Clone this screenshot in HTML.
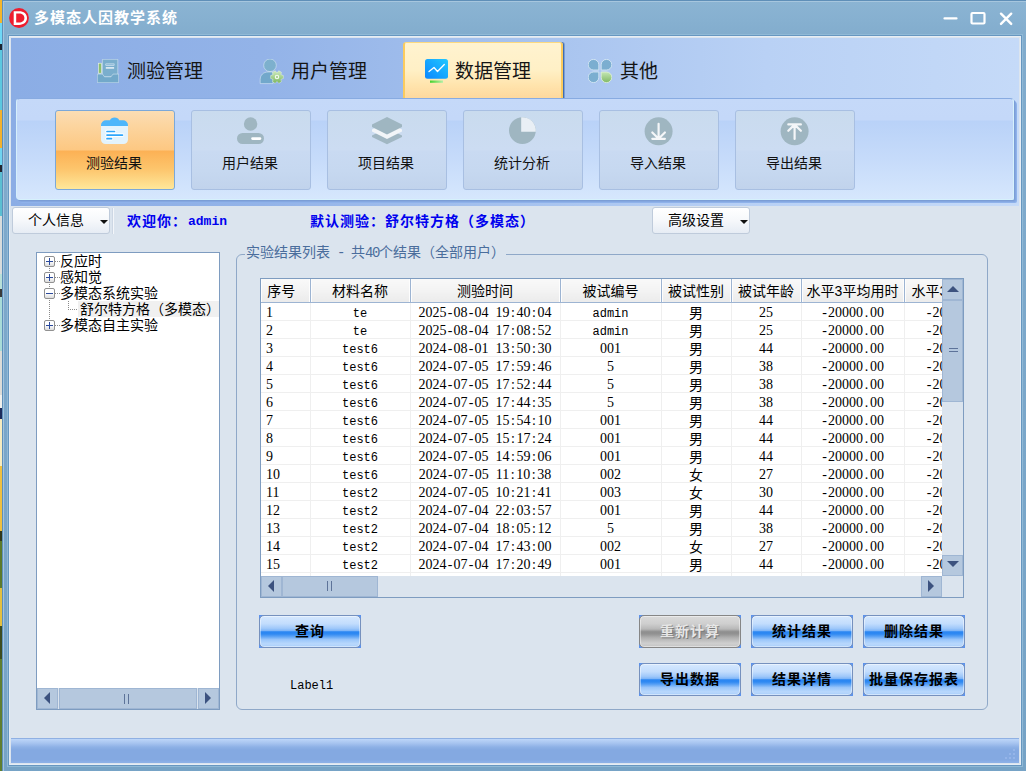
<!DOCTYPE html>
<html lang="zh-CN">
<head>
<meta charset="utf-8">
<title>多模态人因教学系统</title>
<style>
*{box-sizing:border-box;margin:0;padding:0}
html,body{width:1026px;height:771px;overflow:hidden}
body{position:relative;background:#84aece;font-family:"Liberation Sans","Noto Sans CJK SC",sans-serif;font-size:14px;color:#000}
.a{position:absolute}
.nw{white-space:nowrap}
/* desktop sliver on the far left */
#desk{left:0;top:0;width:2px;height:771px;background:linear-gradient(#f5b62a 0px,#f5b62a 23px,#6fd8f6 23px,#6fd8f6 44px,#1c2330 44px,#1c2330 50px,#5cc8e0 50px,#5cc8e0 110px,#f2b22c 110px,#f2b22c 148px,#6fd4f0 148px,#6fd4f0 165px,#22262e 165px,#22262e 172px,#5bbfd2 172px,#5bbfd2 216px,#d8dcdc 216px,#d8dcdc 274px,#b8e0d8 274px,#b8e0d8 289px,#3a3a3a 289px,#3a3a3a 297px,#a8dcd8 297px,#a8dcd8 351px,#dcdcd8 351px,#dcdcd8 395px,#f0f0ec 395px,#f0f0ec 408px,#1c2c5c 408px,#1c2c5c 419px,#f6ecc0 419px,#f6ecc0 466px,#eec040 466px,#eec040 531px,#30381c 531px,#30381c 541px,#5b7a2c 541px,#5b7a2c 588px,#e3c040 588px,#e3c040 626px,#3c4c20 626px,#3c4c20 659px,#5f7e30 659px,#5f7e30 771px)}
/* window frame */
#frame{left:2px;top:0;width:1024px;height:771px;background:linear-gradient(#8bb4d3 0,#86b0d0 20px,#82accd 36px,#7ba7ca 400px,#76a3c6 771px);border-left:1px solid #5f90ba;border-top:1px solid #5f8fb8}
#frame:before{content:"";position:absolute;left:0;top:0;right:0;bottom:0;border-left:1px solid #a3c4dd;border-top:1px solid #a6c6de}
#frIn{left:8px;top:35px;width:1014px;height:731px;border:1px solid #6797c0;box-shadow:0 0 0 1px #90b9d6}
#client{left:9px;top:36px;width:1012px;height:729px;background:#dbe4ee;box-shadow:inset 1px 1px 0 #e6edf5,inset -1px -1px 0 #e6edf5}
/* title */
#ticon{left:9px;top:8px;width:20px;height:20px}
#ttext{left:34px;top:8px;height:20px;line-height:20px;font-size:15px;font-weight:bold;color:#fff;letter-spacing:1px}
.wc{stroke:#fff;stroke-width:2.2;fill:none;stroke-linecap:round;stroke-linejoin:round}
/* ribbon control */
#rib{left:11px;top:38px;width:1008px;height:168px;background:linear-gradient(90deg,#8badE5 0,#93b3e8 25%,#a6c2ee 50%,#b9d1f5 75%,#c5daf8 100%)}
.tab{top:43px;height:55px}
.tab svg{position:absolute}
.tl{position:absolute;top:15px;height:28px;line-height:28px;font-size:19px;color:#151515;white-space:nowrap}
#tabA{left:403px;top:42px;width:160px;height:57px;background:linear-gradient(#fff3d0 0,#fff0c6 48%,#ffe4ad 75%,#fed79c 100%);border-top:1px solid #fcd980;border-left:2px solid #fbcb5e;border-right:2px solid #fbcb5e;border-radius:3px 3px 0 0;box-shadow:1px 0 0 #3f6db3,2px 0 0 rgba(68,112,180,.45)}
#panel{left:16px;top:98px;width:998px;height:102px;border-radius:4px 4px 2px 4px;border:1px solid #d6f1fc;border-top-color:#88abe1;border-left-color:#d6effb;box-shadow:1px 1px 0 #7b9dd6,2px 2px 0 #84a7e0,3px 3px 0 #8fb2ea;background:linear-gradient(#c5d9f9 0,#c4d8f9 21px,#b9d2f8 22px,#c6dbfa 60px,#d6e7fd 100%)}
.rb{top:110px;width:120px;height:80px;border:1px solid #a8bfe2;border-radius:3px;background:linear-gradient(#c9dbee 0,#ccdcf2 39px,#c9daf2 40px,#c6d8f0 60px,#c1d3ec 100%)}
.rb.on{border-color:#7ba8d9;background:linear-gradient(#fbddb4 0,#fcd5a0 14px,#fdc882 39px,#fcb155 40px,#fdc56c 58px,#fee79a 100%)}
.rb svg{position:absolute;left:0;top:0}
.rl{position:absolute;left:-1px;width:118px;top:42px;height:20px;line-height:20px;text-align:center;font-size:14px;color:#111;white-space:nowrap}
/* tool row */
.dd{top:207px;height:27px;border:1px solid #bfcbdb;border-radius:3px;background:linear-gradient(#fff 0,#f6f8fb 50%,#e6ecf4 100%);font-size:14px;line-height:24px;white-space:nowrap}
.dd i{position:absolute;top:12px;width:0;height:0;border:4px solid transparent;border-top:4px solid #111;border-bottom:0}
.bl{top:212px;height:18px;line-height:18px;font-size:14px;font-weight:bold;color:#0000ee;white-space:nowrap;letter-spacing:1px}
.mono{font-family:"Liberation Mono","Noto Sans CJK SC",monospace}
/* tree */
#tree{left:36px;top:252px;width:184px;height:458px;background:#fff;border:1px solid #7e9cc0}
.ti{position:absolute;height:16px;line-height:16px;font-size:14px;white-space:nowrap;color:#000}
.eb{position:absolute;left:7px;width:11px;height:11px;border:1px solid #919191;background:linear-gradient(#fff 0,#fff 45%,#dcdcdc 100%);border-radius:2px}
.eb:before{content:"";position:absolute;left:1px;top:4px;width:7px;height:1px;background:#2b4a9c}
.eb.p:after{content:"";position:absolute;left:4px;top:1px;width:1px;height:7px;background:#2b4a9c}
.dv{position:absolute;width:1px;background-image:linear-gradient(#8a8a8a 50%,transparent 50%);background-size:1px 2px}
.dh{position:absolute;height:1px;background-image:linear-gradient(90deg,#8a8a8a 50%,transparent 50%);background-size:2px 1px}
/* scrollbars */
.sb{background:#dbe4ee}
.sbb{position:absolute;background:#b5c8de;border:1px solid #9fb6d3}
.ar{position:absolute;width:0;height:0;border:5px solid transparent}
/* group box */
#gb{left:236px;top:254px;width:752px;height:456px;border:1px solid #8fa8c8;border-radius:6px}
#gbt{left:245px;top:243px;width:261px;overflow:hidden;height:18px;line-height:18px;padding:0 1px;background:#dbe4ee;color:#4a6d9c;font-size:14px;white-space:nowrap}
/* table */
#grid{left:260px;top:278px;width:704px;height:320px;background:#fff;border:1px solid #7e9cc0;overflow:hidden}
#gridin{left:0;top:0;width:681px;height:297px;overflow:hidden}
table{border-collapse:collapse;table-layout:fixed;width:750px;font-size:14px}
th{height:23px;font-weight:normal;font-size:14px;text-align:center;border-right:1px solid #9db4d2;border-bottom:1px solid #9db4d2;background:linear-gradient(#f9f9f9 0,#f3f3f3 50%,#ebebeb 100%);white-space:nowrap;overflow:hidden;padding:2px 0 0 0;line-height:20px;box-shadow:inset 1px 0 0 #fdfdfd,inset -1px 0 0 #fdfdfd}
td{height:18px;line-height:12px;padding:5px 0 0 0;text-align:center;border-right:1px solid #efefef;border-bottom:1px solid #efefef;white-space:nowrap;overflow:hidden;font-family:"Liberation Mono",monospace;font-size:12px;letter-spacing:0}
td.n{font-family:"Liberation Serif",serif;font-size:14px;padding-top:3px;line-height:13px}
td i{display:inline-block;width:7px;text-align:center;font-style:normal}
td.c1{text-align:left;padding-left:5px}
td.cj{font-family:"Liberation Sans","Noto Sans CJK SC",sans-serif;font-size:14px;letter-spacing:0;padding-top:3px;line-height:14px}
td.c8{text-align:left;padding-left:21px}
/* glossy buttons */
.gbn{width:102px;height:33px;background:#5d92ea}
.gbn b{position:absolute;left:0;top:0;right:0;bottom:0;border-radius:5px;border:1px solid #7691be;box-shadow:inset 0 0 0 1px rgba(255,255,255,.45);background:linear-gradient(#d6e8fe 0,#c2ddfd 25%,#9fc8fa 40%,#80b6f8 47%,#2a86f2 51%,#2f89f2 58%,#5ba2f5 66%,#9ac6fa 76%,#b9d8fc 90%,#a6cdfb 100%);font-size:14px;letter-spacing:1px;font-weight:bold;line-height:31px;text-align:center;color:#000;white-space:nowrap}
.gbn.dis{background:#5d92ea}
.gbn.dis b{border-color:#868686;background:linear-gradient(#dadada 0,#cfcfcf 25%,#b8b8b8 42%,#8e8e8e 51%,#929292 58%,#b0b0b0 70%,#cfcfcf 88%,#c4c4c4 100%);color:#e6e6e6;text-shadow:1px 1px 0 #7a7a7a}
#status{left:11px;top:738px;width:1008px;height:25px;background:linear-gradient(#bdd6f9 0,#a8c5f0 4px,#8eb1e6 8px,#84a9e1 11px,#84a9e1 21px,#8cb0e6 23px);border-top:1px solid #8fb0e3}
</style>
</head>
<body>
<div id="desk" class="a"></div>
<div id="frame" class="a"></div>
<div id="frIn" class="a"></div>
<div id="client" class="a"></div>

<!-- title bar -->
<svg id="ticon" class="a" viewBox="0 0 20 20"><circle cx="10" cy="10" r="9.9" fill="#ee1c2e"/><path d="M4.700 3.200h5.300c4.800 0 8 2.700 8 6.850s-3.200 6.850-8 6.850h-5.300z M7.200 5.500v9.100h2.800c3.300 0 5.400-1.700 5.400-4.550s-2.100-4.550-5.400-4.550z" fill="#fff" fill-rule="evenodd"/></svg>
<div id="ttext" class="a nw">多模态人因教学系统</div>
<svg class="a" style="left:940px;top:8px;width:78px;height:22px" viewBox="0 0 78 22"><path class="wc" d="M4.500 10.400h12"/><rect class="wc" x="31.500" y="5" width="13" height="10.500" rx="1"/><path class="wc" style="stroke-width:2.400" d="M61 5.700l10.200 10.200M71.200 5.700l-10.200 10.200"/></svg>

<!-- ribbon -->
<div id="rib" class="a"></div>
<div id="tabA" class="a"></div>

<div class="a tab" style="left:90px;width:130px">
  <svg style="left:7px;top:16px;width:22px;height:24px" viewBox="0 0 22 24"><rect x="1.600" y="4.200" width="2.800" height="10" fill="#8cc06c" stroke="#eef6e6" stroke-width=".6"/><path d="M5.400 .3h15.400v17.500h-15.400z" fill="#7aaecd" stroke="#e4f0f6" stroke-opacity=".85" stroke-width=".6"/><rect x="8.800" y="4.900" width="8.300" height="1.500" fill="#86b5d6" stroke="#f2f8fb" stroke-width=".5"/><rect x="8.800" y="8.100" width="8.300" height="1.600" fill="#e4eff7"/><path d="M.3 15.100h5.200l2 2.700h6.500l2-2.700h5.700v8.600h-21.400z" fill="#72a9ca" stroke="#e4f0f6" stroke-opacity=".85" stroke-width=".6"/></svg>
  <div class="tl" style="left:37px">测验管理</div>
</div>
<div class="a tab" style="left:250px;width:130px">
  <svg style="left:9px;top:16px;width:26px;height:26px" viewBox="0 0 26 26"><defs><linearGradient id="gq" x1="0" y1="0" x2="0" y2="1"><stop offset="0" stop-color="#cbe7bc"/><stop offset=".55" stop-color="#a3d08a"/><stop offset="1" stop-color="#7db661"/></linearGradient></defs><circle cx="11" cy="6.300" r="6.300" fill="#7db0cd" stroke="#e6f1f7" stroke-opacity=".85" stroke-width=".6"/><path d="M1.200 24.600v-4.100c0-4.500 3.300-7.500 7.800-7.500h5v11.600z" fill="#72a8cb" stroke="#e6f1f7" stroke-opacity=".85" stroke-width=".6"/><path d="M23.85 16.65L23.85 19.35L22.11 19.83L21.64 20.65L22.09 22.39L19.75 23.74L18.47 22.48L17.53 22.48L16.25 23.74L13.91 22.39L14.36 20.65L13.89 19.83L12.15 19.35L12.15 16.65L13.89 16.17L14.36 15.35L13.91 13.61L16.25 12.26L17.53 13.52L18.47 13.52L19.75 12.26L22.09 13.61L21.64 15.35L22.11 16.17z" fill="url(#gq)" stroke="url(#gq)" stroke-width="1" stroke-linejoin="round"/><path d="M23.85 16.65L23.85 19.35L22.11 19.83L21.64 20.65L22.09 22.39L19.75 23.74L18.47 22.48L17.53 22.48L16.25 23.74L13.91 22.39L14.36 20.65L13.89 19.83L12.15 19.35L12.15 16.65L13.89 16.17L14.36 15.35L13.91 13.61L16.25 12.26L17.53 13.52L18.47 13.52L19.75 12.26L22.09 13.61L21.64 15.35L22.11 16.17z" fill="none" stroke="#f4faee" stroke-opacity=".7" stroke-width=".5" stroke-linejoin="round" transform="translate(18 18) scale(1.09) translate(-18 -18)"/><circle cx="18" cy="18" r="1.700" fill="none" stroke="#f6fbf2" stroke-width="1.100"/></svg>
  <div class="tl" style="left:41px">用户管理</div>
</div>
<div class="a tab" style="left:410px;width:150px">
  <svg style="left:15px;top:16px;width:23px;height:24px" viewBox="0 0 23 24"><defs><linearGradient id="gm" x1="0" y1="1" x2="1" y2="0"><stop offset="0" stop-color="#0a86ff"/><stop offset="1" stop-color="#22c8ff"/></linearGradient><linearGradient id="gg" x1="0" y1="0" x2="1" y2="0"><stop offset="0" stop-color="#45d22c"/><stop offset="1" stop-color="#b4f0a8"/></linearGradient></defs><rect x="0" y="0" width="23" height="19.800" rx="2.500" fill="url(#gm)"/><path d="M4 12.500l5-4 3.500 4 6.800-7" fill="none" stroke="#fff" stroke-width="1.300" stroke-linecap="round" stroke-linejoin="round"/><rect x="5" y="21.500" width="13" height="2.300" fill="url(#gg)"/></svg>
  <div class="tl" style="left:45px">数据管理</div>
</div>
<div class="a tab" style="left:580px;width:100px">
  <svg style="left:8px;top:16px;width:24px;height:24px" viewBox="0 0 24 24"><g stroke="#dcecf5" stroke-width=".8"><path d="M5.500 .4h0a5.300 5.300 0 0 1 5.300 5.300v5.300h-5.300a5.300 5.300 0 0 1 0-10.600z" fill="#7baed0"/><path d="M18.500 .4h0a5.300 5.300 0 0 1 0 10.600h-5.300v-5.300a5.300 5.300 0 0 1 5.300-5.300z" fill="#7baed0"/><path d="M5.500 13h5.300v5.300a5.300 5.300 0 0 1-5.300 5.300h0a5.300 5.300 0 0 1 0-10.600z" fill="#7baed0"/></g><defs><linearGradient id="gp" x1="0" y1="0" x2="0" y2="1"><stop offset="0" stop-color="#c4e6b4"/><stop offset="1" stop-color="#80b864"/></linearGradient></defs><path d="M13.200 13h5.300a5.300 5.300 0 0 1 0 10.600h0a5.300 5.300 0 0 1-5.300-5.300z" fill="url(#gp)" stroke="#e2f2d8" stroke-width=".8"/></svg>
  <div class="tl" style="left:40px">其他</div>
</div>

<div id="panel" class="a"></div>

<div class="a rb on" style="left:55px">
  <svg width="118" height="78" viewBox="0 0 118 78"><path d="M45 15v-.700a5 5 0 0 1 5-5h4a4.800 3.900 0 0 1 9.200 0h3.800a5 5 0 0 1 5 5v.700z" fill="#4db6fb"/><path d="M45 15h27v13.500a4.500 4.500 0 0 1-4.500 4.500h-18a4.500 4.500 0 0 1-4.500-4.500z" fill="#e3f3fd"/><g stroke="#fff" stroke-width="3.600" stroke-linecap="round"><path d="M51 20.500h7.500M51 24.100h15.500M51 27.700h4.500"/></g><g stroke="#2fa6fb" stroke-width="1.700" stroke-linecap="round"><path d="M51 20.500h7.500M51 24.100h15.500M51 27.700h4.500"/></g></svg>
  <div class="rl">测验结果</div>
</div>
<div class="a rb" style="left:191px">
  <svg width="118" height="78" viewBox="0 0 118 78"><circle cx="58.600" cy="13" r="6.700" fill="#9fb6c1"/><rect x="45" y="22" width="27" height="11" rx="5.500" fill="#9fb6c1"/><path d="M60.500 27.600h7.500" stroke="#fff" stroke-width="2.600" stroke-linecap="round"/></svg>
  <div class="rl">用户结果</div>
</div>
<div class="a rb" style="left:327px">
  <svg width="118" height="78" viewBox="0 0 118 78"><path d="M44 24.500L59 17l15 7.500V26L59 33.300 44 26z" fill="#a1b7c3"/><path d="M44 18.500L59 11l15 7.500v2L59 28 44 20.500z" fill="#f2f5f8"/><path d="M44 13.500L59 6l15 7.500V16L59 23.500 44 16z" fill="#9fb6c1"/></svg>
  <div class="rl">项目结果</div>
</div>
<div class="a rb" style="left:463px">
  <svg width="118" height="78" viewBox="0 0 118 78"><circle cx="58.400" cy="19.600" r="13.400" fill="#9fb6c1"/><path d="M57.200 6.200a13.500 13.500 0 0 1 14.600 14.600h-14.600z" fill="#e9eff5"/></svg>
  <div class="rl">统计分析</div>
</div>
<div class="a rb" style="left:599px">
  <svg width="118" height="78" viewBox="0 0 118 78"><circle cx="58.600" cy="20.300" r="14" fill="#9fb6c1"/><path d="M58.600 12.800v14.500M52.300 21.500l6.300 6.200 6.300-6.200M52.300 27.800h12.600" fill="none" stroke="#f4f6f8" stroke-width="2.200" stroke-linecap="round" stroke-linejoin="round"/></svg>
  <div class="rl">导入结果</div>
</div>
<div class="a rb" style="left:735px">
  <svg width="118" height="78" viewBox="0 0 118 78"><circle cx="58.600" cy="20.300" r="14" fill="#9fb6c1"/><path d="M58.600 13.500v14.500M52.300 19.800l6.300-6.200 6.300 6.200M52.300 13.400h12.600" fill="none" stroke="#f4f6f8" stroke-width="2.200" stroke-linecap="round" stroke-linejoin="round"/></svg>
  <div class="rl">导出结果</div>
</div>

<!-- tool row -->
<div class="a dd" style="left:12px;width:98px"><span class="a" style="left:15px;top:0">个人信息</span><i style="left:87px"></i></div>
<div class="a" style="left:112px;top:208px;width:1px;height:26px;background:#cdd7e4"></div>
<div class="a" style="left:113px;top:208px;width:1px;height:26px;background:#f3f6fa"></div>
<div class="a bl" style="left:127px">欢迎你：</div><div class="a bl mono" style="left:188px;top:213px;font-size:13px;letter-spacing:0">admin</div>
<div class="a bl" style="left:310px">默认测验：舒尔特方格（多模态）</div>
<div class="a dd" style="left:652px;width:98px"><span class="a" style="left:15px;top:0">高级设置</span><i style="left:87px"></i></div>
<!-- tree -->
<div id="tree" class="a">
  <div class="dv" style="left:12px;top:9px;height:64px"></div>
  <div class="dh" style="left:18px;top:8px;width:5px"></div>
  <div class="dh" style="left:18px;top:24px;width:5px"></div>
  <div class="dh" style="left:18px;top:40px;width:5px"></div>
  <div class="dh" style="left:18px;top:72px;width:5px"></div>
  <div class="dv" style="left:31px;top:48px;height:9px"></div>
  <div class="dh" style="left:31px;top:56px;width:10px"></div>
  <div class="eb p" style="top:3px"></div><div class="ti" style="left:23px;top:0">反应时</div>
  <div class="eb p" style="top:19px"></div><div class="ti" style="left:23px;top:16px">感知觉</div>
  <div class="eb" style="top:35px"></div><div class="ti" style="left:23px;top:32px">多模态系统实验</div>
  <div class="ti" style="left:41px;top:48px;width:141px;background:#f0f0f0;padding-left:2px">舒尔特方格（多模态）</div>
  <div class="eb p" style="top:67px"></div><div class="ti" style="left:23px;top:64px">多模态自主实验</div>
  <div class="a sb" style="left:0;top:435px;width:182px;height:21px">
    <div class="sbb" style="left:0;top:0;width:21px;height:21px"><span class="ar" style="left:6px;top:3px;border-right:6px solid #3c527f;border-left:0;border-top-width:6px;border-bottom-width:6px"></span></div>
    <div class="sbb" style="left:22px;top:0;width:138px;height:21px"><span class="a" style="left:64px;top:5px;width:1px;height:10px;background:#5d7399"></span><span class="a" style="left:68px;top:5px;width:1px;height:10px;background:#5d7399"></span></div>
    <div class="sbb" style="left:161px;top:0;width:21px;height:21px"><span class="ar" style="left:6px;top:3px;border-left:6px solid #3c527f;border-right:0;border-top-width:6px;border-bottom-width:6px"></span></div>
  </div>
</div>

<!-- group box -->
<div id="gb" class="a"></div>
<div id="gbt" class="a">实验结果列表<span class="mono" style="letter-spacing:-1.4px;white-space:pre"> - </span>共<span class="mono" style="letter-spacing:-1.4px">40</span>个结果（全部用户）</div>

<div id="grid" class="a">
 <div id="gridin" class="a">
 <table>
  <colgroup><col style="width:49px"><col style="width:100px"><col style="width:150px"><col style="width:101px"><col style="width:70px"><col style="width:70px"><col style="width:103px"><col style="width:107px"></colgroup>
  <tr><th style="padding-right:8px">序号</th><th>材料名称</th><th>测验时间</th><th>被试编号</th><th>被试性别</th><th>被试年龄</th><th>水平3平均用时</th><th style="text-align:left;padding-left:7px">水平3正确率</th></tr>
<tr><td class="n c1">1</td><td>te</td><td class="n">2025<i>-</i>08<i>-</i>04<i>&nbsp;</i>19<i>:</i>40<i>:</i>04</td><td>admin</td><td class="cj">男</td><td class="n">25</td><td class="n"><i>-</i>20000<i>.</i>00</td><td class="n c8"><i>-</i>20000<i>.</i>00</td></tr>
<tr><td class="n c1">2</td><td>te</td><td class="n">2025<i>-</i>08<i>-</i>04<i>&nbsp;</i>17<i>:</i>08<i>:</i>52</td><td>admin</td><td class="cj">男</td><td class="n">25</td><td class="n"><i>-</i>20000<i>.</i>00</td><td class="n c8"><i>-</i>20000<i>.</i>00</td></tr>
<tr><td class="n c1">3</td><td>test6</td><td class="n">2024<i>-</i>08<i>-</i>01<i>&nbsp;</i>13<i>:</i>50<i>:</i>30</td><td class="n">001</td><td class="cj">男</td><td class="n">44</td><td class="n"><i>-</i>20000<i>.</i>00</td><td class="n c8"><i>-</i>20000<i>.</i>00</td></tr>
<tr><td class="n c1">4</td><td>test6</td><td class="n">2024<i>-</i>07<i>-</i>05<i>&nbsp;</i>17<i>:</i>59<i>:</i>46</td><td class="n">5</td><td class="cj">男</td><td class="n">38</td><td class="n"><i>-</i>20000<i>.</i>00</td><td class="n c8"><i>-</i>20000<i>.</i>00</td></tr>
<tr><td class="n c1">5</td><td>test6</td><td class="n">2024<i>-</i>07<i>-</i>05<i>&nbsp;</i>17<i>:</i>52<i>:</i>44</td><td class="n">5</td><td class="cj">男</td><td class="n">38</td><td class="n"><i>-</i>20000<i>.</i>00</td><td class="n c8"><i>-</i>20000<i>.</i>00</td></tr>
<tr><td class="n c1">6</td><td>test6</td><td class="n">2024<i>-</i>07<i>-</i>05<i>&nbsp;</i>17<i>:</i>44<i>:</i>35</td><td class="n">5</td><td class="cj">男</td><td class="n">38</td><td class="n"><i>-</i>20000<i>.</i>00</td><td class="n c8"><i>-</i>20000<i>.</i>00</td></tr>
<tr><td class="n c1">7</td><td>test6</td><td class="n">2024<i>-</i>07<i>-</i>05<i>&nbsp;</i>15<i>:</i>54<i>:</i>10</td><td class="n">001</td><td class="cj">男</td><td class="n">44</td><td class="n"><i>-</i>20000<i>.</i>00</td><td class="n c8"><i>-</i>20000<i>.</i>00</td></tr>
<tr><td class="n c1">8</td><td>test6</td><td class="n">2024<i>-</i>07<i>-</i>05<i>&nbsp;</i>15<i>:</i>17<i>:</i>24</td><td class="n">001</td><td class="cj">男</td><td class="n">44</td><td class="n"><i>-</i>20000<i>.</i>00</td><td class="n c8"><i>-</i>20000<i>.</i>00</td></tr>
<tr><td class="n c1">9</td><td>test6</td><td class="n">2024<i>-</i>07<i>-</i>05<i>&nbsp;</i>14<i>:</i>59<i>:</i>06</td><td class="n">001</td><td class="cj">男</td><td class="n">44</td><td class="n"><i>-</i>20000<i>.</i>00</td><td class="n c8"><i>-</i>20000<i>.</i>00</td></tr>
<tr><td class="n c1">10</td><td>test6</td><td class="n">2024<i>-</i>07<i>-</i>05<i>&nbsp;</i>11<i>:</i>10<i>:</i>38</td><td class="n">002</td><td class="cj">女</td><td class="n">27</td><td class="n"><i>-</i>20000<i>.</i>00</td><td class="n c8"><i>-</i>20000<i>.</i>00</td></tr>
<tr><td class="n c1">11</td><td>test2</td><td class="n">2024<i>-</i>07<i>-</i>05<i>&nbsp;</i>10<i>:</i>21<i>:</i>41</td><td class="n">003</td><td class="cj">女</td><td class="n">30</td><td class="n"><i>-</i>20000<i>.</i>00</td><td class="n c8"><i>-</i>20000<i>.</i>00</td></tr>
<tr><td class="n c1">12</td><td>test2</td><td class="n">2024<i>-</i>07<i>-</i>04<i>&nbsp;</i>22<i>:</i>03<i>:</i>57</td><td class="n">001</td><td class="cj">男</td><td class="n">44</td><td class="n"><i>-</i>20000<i>.</i>00</td><td class="n c8"><i>-</i>20000<i>.</i>00</td></tr>
<tr><td class="n c1">13</td><td>test2</td><td class="n">2024<i>-</i>07<i>-</i>04<i>&nbsp;</i>18<i>:</i>05<i>:</i>12</td><td class="n">5</td><td class="cj">男</td><td class="n">38</td><td class="n"><i>-</i>20000<i>.</i>00</td><td class="n c8"><i>-</i>20000<i>.</i>00</td></tr>
<tr><td class="n c1">14</td><td>test2</td><td class="n">2024<i>-</i>07<i>-</i>04<i>&nbsp;</i>17<i>:</i>43<i>:</i>00</td><td class="n">002</td><td class="cj">女</td><td class="n">27</td><td class="n"><i>-</i>20000<i>.</i>00</td><td class="n c8"><i>-</i>20000<i>.</i>00</td></tr>
<tr><td class="n c1">15</td><td>test2</td><td class="n">2024<i>-</i>07<i>-</i>04<i>&nbsp;</i>17<i>:</i>20<i>:</i>49</td><td class="n">001</td><td class="cj">男</td><td class="n">44</td><td class="n"><i>-</i>20000<i>.</i>00</td><td class="n c8"><i>-</i>20000<i>.</i>00</td></tr>
<tr><td class="n c1">16</td><td>test2</td><td class="n">2024<i>-</i>07<i>-</i>04<i>&nbsp;</i>16<i>:</i>58<i>:</i>31</td><td class="n">001</td><td class="cj">男</td><td class="n">44</td><td class="n"><i>-</i>20000<i>.</i>00</td><td class="n c8"><i>-</i>20000<i>.</i>00</td></tr>
 </table>
 </div>
 <!-- vertical scrollbar -->
 <div class="a sb" style="left:681px;top:0;width:21px;height:297px">
   <div class="sbb" style="left:0;top:0;width:21px;height:21px"><span class="ar" style="left:4px;top:6px;border-bottom:6px solid #3c527f;border-top:0;border-left-width:6px;border-right-width:6px"></span></div>
   <div class="sbb" style="left:0;top:21px;width:21px;height:102px"><span class="a" style="left:6px;top:47px;width:9px;height:1px;background:#5d7399"></span><span class="a" style="left:6px;top:50px;width:9px;height:1px;background:#5d7399"></span></div>
   <div class="sbb" style="left:0;top:276px;width:21px;height:21px"><span class="ar" style="left:4px;top:5px;border-top:6px solid #3c527f;border-bottom:0;border-left-width:6px;border-right-width:6px"></span></div>
 </div>
 <!-- horizontal scrollbar -->
 <div class="a sb" style="left:0;top:297px;width:702px;height:21px">
   <div class="sbb" style="left:0;top:0;width:21px;height:21px"><span class="ar" style="left:6px;top:3px;border-right:6px solid #3c527f;border-left:0;border-top-width:6px;border-bottom-width:6px"></span></div>
   <div class="sbb" style="left:21px;top:0;width:96px;height:21px"><span class="a" style="left:44px;top:4px;width:1px;height:10px;background:#5d7399"></span><span class="a" style="left:48px;top:4px;width:1px;height:10px;background:#5d7399"></span></div>
   <div class="sbb" style="left:660px;top:0;width:21px;height:21px"><span class="ar" style="left:6px;top:3px;border-left:6px solid #3c527f;border-right:0;border-top-width:6px;border-bottom-width:6px"></span></div>
 </div>
</div>

<!-- buttons -->
<div class="a gbn" style="left:259px;top:615px"><b>查询</b></div>
<div class="a gbn dis" style="left:639px;top:615px"><b>重新计算</b></div>
<div class="a gbn" style="left:751px;top:615px"><b>统计结果</b></div>
<div class="a gbn" style="left:863px;top:615px"><b>删除结果</b></div>
<div class="a gbn" style="left:639px;top:663px"><b>导出数据</b></div>
<div class="a gbn" style="left:751px;top:663px"><b>结果详情</b></div>
<div class="a gbn" style="left:863px;top:663px"><b>批量保存报表</b></div>
<div class="a mono nw" style="left:290px;top:678px;height:16px;line-height:16px;font-size:12px">Label1</div>

<div id="status" class="a"><svg class="a" style="left:993px;top:9px;width:13px;height:13px" viewBox="0 0 13 13"><g fill="#95b5e9"><rect x="9" y="1" width="2" height="2"/><rect x="5" y="5" width="2" height="2"/><rect x="9" y="5" width="2" height="2"/><rect x="1" y="9" width="2" height="2"/><rect x="5" y="9" width="2" height="2"/><rect x="9" y="9" width="2" height="2"/></g></svg></div>
</body>
</html>
